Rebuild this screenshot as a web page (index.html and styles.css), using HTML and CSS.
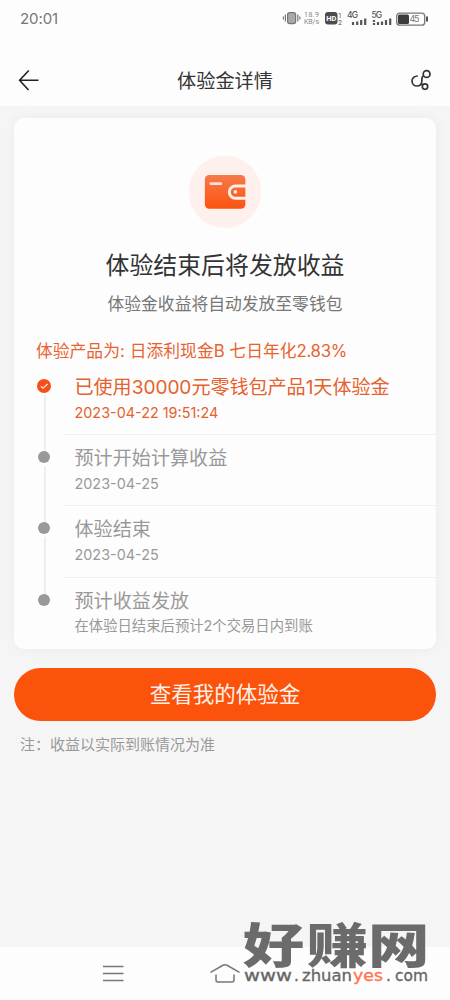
FILE: index.html
```html
<!DOCTYPE html>
<html lang="zh-CN">
<head>
<meta charset="utf-8">
<title>体验金详情</title>
<link rel="stylesheet" href="styles.css">
</head>
<body>
<div class="phone">
  <header class="top">
    <div class="status">
      <span class="clock">20:01</span>
      <svg class="status-icons" width="150" height="20" viewBox="0 0 150 20">
        <g fill="none" stroke="#777" stroke-width="1.2">
          <rect x="5.6" y="3.6" width="8" height="11" rx="2" fill="#aaa"/>
          <path d="M3.4 5.5v7M15.8 5.5v7M1.4 7.5v3M17.8 7.5v3"/>
        </g>
        <g class="tiny">
          <text x="22" y="8.2" textLength="15">18.9</text>
          <text x="22" y="15.2" textLength="15">KB/s</text>
        </g>
        <rect x="43" y="3" width="12.5" height="12.5" rx="3" fill="#4c4c4c"/>
        <text class="hd" x="44.3" y="12" textLength="10">HD</text>
        <g class="tiny dark">
          <text x="56" y="9">1</text><text x="56" y="16">2</text>
        </g>
        <g class="net">
          <text x="65" y="9.2" textLength="11">4G</text>
          <text x="89.5" y="9.2" textLength="10.5">5G</text>
        </g>
        <path d="M71 16v-3M75.2 16v-3.5M79.2 16v-5M83.2 16v-6.5M92 11v2M92 14v2M96 16v-3M100 16v-3.5M104 16v-5M108.2 16v-6.5" stroke="#555" stroke-width="2.2"/>
        <rect x="114.7" y="4.2" width="28" height="12" rx="3" fill="#fff" stroke="#777" stroke-width="1.3"/>
        <rect x="116" y="5.5" width="11" height="9.4" rx="1.5" fill="#3c3c3c"/>
        <path d="M145 7.5v5" stroke="#555" stroke-width="2"/>
        <text class="battery" x="127.5" y="13.3" textLength="10">45</text>
      </svg>
    </div>
    <nav class="nav">
      <svg width="24" height="24" viewBox="0 0 24 24" fill="none" stroke="#222" stroke-width="1.6">
        <path d="M11.8 2.5L2.6 12.2 11.5 22M2.7 12.2H21.5"/>
      </svg>
      <h1>体验金详情</h1>
      <svg width="24" height="24" viewBox="0 0 24 24" fill="none" stroke="#333" stroke-width="1.7">
        <path d="M8.8 8C5.4 7.8 3 10.2 3 13c0 3 2.300 5 4.900 5 2.800 0 4.700-2 4.900-4.500C13 10.600 12.300 8.700 14.600 7.700"/>
        <circle cx="17.600" cy="6" r="3.400"/>
        <circle cx="16" cy="18.600" r="2.700"/>
        <path d="M12.200 15.600l1.700 1.400"/>
      </svg>
    </nav>
  </header>

  <main class="content">
    <section class="card">
      <svg class="wallet" width="74" height="74" viewBox="0 0 74 74">
        <defs>
          <linearGradient id="walletFill" x1="0" y1="0" x2="0" y2="1">
            <stop offset="0" stop-color="#f77a49"/>
            <stop offset="1" stop-color="#fb5310"/>
          </linearGradient>
        </defs>
        <circle cx="37" cy="37" r="36.3" fill="#fef0ec"/>
        <rect x="16.8" y="20" width="40.6" height="34" rx="4.5" fill="url(#walletFill)"/>
        <path d="M58 31H47.5a6.2 6.2 0 0 0 0 12.4H58" fill="none" stroke="#fff0eb" stroke-width="3"/>
        <path d="M22.8 28.8h10" stroke="#fde0d5" stroke-width="2.8" stroke-linecap="round"/>
        <circle cx="47.4" cy="37" r="1.8" fill="#fff0eb"/>
      </svg>
      <h2>体验结束后将发放收益</h2>
      <p class="lead">体验金收益将自动发放至零钱包</p>
      <p class="product"><span class="label">体验产品为:</span><span>日添利现金<i>B</i></span><span>七日年化<i>2.83%</i></span></p>
      <ol class="steps">
        <li class="step active">
          <span class="mark"><svg class="dot" width="14" height="14" viewBox="0 0 14 14"><circle cx="7" cy="7" r="7" fill="#f4501a"/><path d="M3.8 7.2l2.3 2.1 4.5-4.3" fill="none" stroke="#ffe8de" stroke-width="1.2"/></svg></span>
          <div class="body"><h3>已使用<i>30000</i>元零钱包产品<i>1</i>天体验金</h3><time>2023-04-22 19:51:24</time></div>
        </li>
        <li class="step">
          <span class="mark"><span class="dot gray"></span></span>
          <div class="body"><h3>预计开始计算收益</h3><time>2023-04-25</time></div>
        </li>
        <li class="step">
          <span class="mark"><span class="dot gray"></span></span>
          <div class="body"><h3>体验结束</h3><time>2023-04-25</time></div>
        </li>
        <li class="step">
          <span class="mark"><span class="dot gray"></span></span>
          <div class="body"><h3>预计收益发放</h3><p class="hint">在体验日结束后预计2个交易日内到账</p></div>
        </li>
      </ol>
    </section>
    <button class="primary">查看我的体验金</button>
    <p class="note">注：收益以实际到账情况为准</p>
  </main>

  <footer class="system-nav">
    <svg width="24" height="20" viewBox="0 0 24 20" stroke="#777" stroke-width="1.5"><path d="M2 3.500h20.500M2 10.500h20.500M2 17.500h20.500"/></svg>
    <svg width="32" height="22" viewBox="0 0 32 22" fill="none" stroke="#777" stroke-width="1.5" stroke-linecap="round" stroke-linejoin="round"><path d="M2 10.200L13.500 3.500Q16 2 18.500 3.500L30 10.200M7 13v5Q7 20 9 20H23Q25 20 25 18V13"/></svg>
  </footer>
  <svg class="watermark" width="204" height="90" viewBox="0 0 204 90">
    <g class="brand" transform="translate(0 56) scale(1.28 1)">
      <text x="0.5" y="0">好</text><text x="50.5" y="0">赚</text><text x="98.500" y="0">网</text>
    </g>
    <g class="site">
      <text x="2" y="74" textLength="48" lengthAdjust="spacingAndGlyphs">www</text>
      <text x="52" y="74">.</text>
      <text x="60" y="74" textLength="50" lengthAdjust="spacingAndGlyphs">zhuan</text>
      <text class="yes" x="111" y="74" textLength="30" lengthAdjust="spacingAndGlyphs">yes</text>
      <text x="144" y="74">.</text>
      <text x="153" y="74" textLength="33" lengthAdjust="spacingAndGlyphs">com</text>
    </g>
  </svg>
</div>
</body>
</html>
```
FILE: styles.css
```css
* { box-sizing: border-box; margin: 0; padding: 0; }
body { background: #f5f5f5; font-family: Inter, "Noto Sans CJK SC", sans-serif; }
h1, h2, h3 { font-weight: 400; }
i { font-style: normal; }
.phone { position: relative; display: flex; flex-direction: column; width: 450px; height: 1000px; overflow: hidden; }

.top { height: 106px; background: #fdfdfd; }
.status { display: flex; justify-content: space-between; align-items: center; height: 37px; padding: 0 18px 0 20px; }
.clock { font-size: 15px; color: #777; letter-spacing: -.1px; }
.tiny { font: 7px Roboto, sans-serif; fill: #888; }
.dark { fill: #555; }
.hd { font: bold 7.5px Roboto, sans-serif; fill: #fff; }
.net { font: 500 8.5px Inter, sans-serif; fill: #555; }
.battery { font: 9px Inter, sans-serif; fill: #777; }
.nav { display: flex; justify-content: space-between; align-items: center; height: 69px; padding: 17px 17px 0; }
.nav h1 { font: 19.2px/28px "Noto Sans CJK SC", sans-serif; color: #333; }

.content { flex: 1; padding: 12px 14px 0; }
.card { display: flex; flex-direction: column; height: 531px; padding: 37px 0 0; background: #fdfdfd; border-radius: 10px; box-shadow: 0 0 14px rgba(0, 0, 0, .045); }
.wallet { align-self: center; }
.card h2 { margin-top: 17px; text-align: center; font: 23.9px/36px "Noto Sans CJK SC", sans-serif; color: #333; }
.lead { margin-top: 10px; text-align: center; font-size: 16.8px; line-height: 24px; color: #777; }
.product { display: flex; height: 24px; margin: 23px 0 0 22px; font-size: 16.8px; line-height: 24px; color: #e8632f; gap: 5px; white-space: nowrap; }
.product i { letter-spacing: -.3px; }
.steps { list-style: none; margin-top: 1px; }
.step { display: flex; height: 71.3px; color: #999; }
.mark { position: relative; flex: none; display: flex; justify-content: center; width: 60px; padding-top: 15px; }
.step:not(:last-child) .mark::after { content: ""; position: absolute; left: 30px; top: 31px; width: 2px; height: 60px; background: #eee; }
.dot { position: relative; z-index: 1; }
.gray { width: 12px; height: 12px; margin-top: 1px; border-radius: 50%; background: #999; }
.body { flex: 1; padding-top: 9px; margin-left: -10px; padding-left: 10.5px; border-bottom: 1px solid #f0f0f0; white-space: nowrap; }
.step:last-child .body { border-bottom: 0; }
.body h3 { font-size: 19.1px; line-height: 28px; }
.active h3 { letter-spacing: -.05px; }
.body time, .hint { display: block; margin-top: 1px; font-size: 14.4px; line-height: 21px; }
.body .hint { margin-top: 0; font-size: 14.35px; }
.active { color: #e5612d; }

.primary { display: block; width: 422px; height: 53px; margin-top: 19px; padding-bottom: 3px; border: 0; border-radius: 27px; background: #fb530c; color: #fff1e8; font: 21.5px/50px "Noto Sans CJK SC", sans-serif; }
.note { margin: 12px 0 0 6px; font: 15px/22px "Noto Sans CJK SC", sans-serif; color: #999; }

.system-nav { display: flex; align-items: center; gap: 84px; height: 53px; padding: 0 0 1px 101px; background: #fdfdfd; }
.watermark { position: absolute; left: 242px; top: 907px; }
.brand { font: 900 48px "Noto Sans CJK SC", sans-serif; fill: #6b6b6b; }
.site { font: 500 15px "DejaVu Sans", sans-serif; fill: #666; stroke: #666; stroke-width: .3px; }
.site .yes { fill: #ff7350; stroke: #ff7350; }
```
